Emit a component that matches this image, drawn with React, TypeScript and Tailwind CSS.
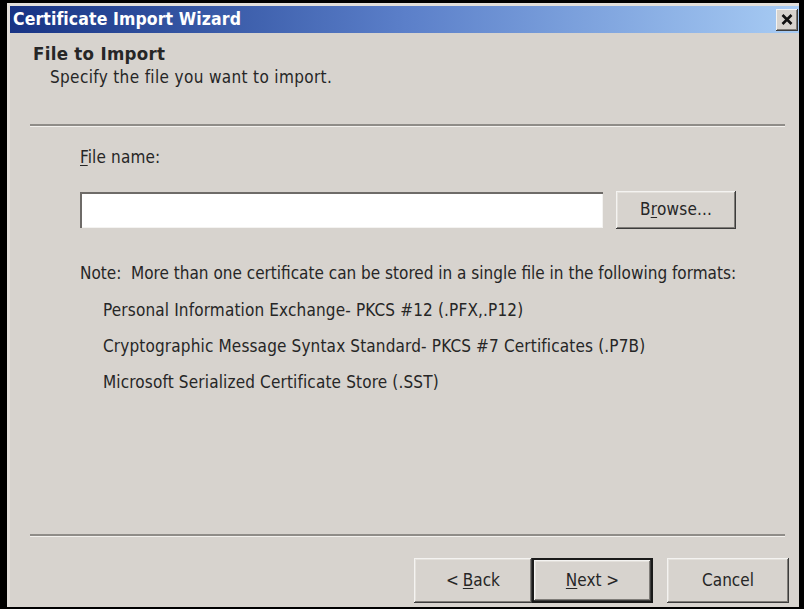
import React from "react";

const bevel =
  "shadow-[inset_-1px_-1px_0_#3c3c3c,inset_1px_1px_0_#f4f3f1,inset_-2px_-2px_0_#7f7c78,inset_2px_2px_0_#e4e1dc]";

function Btn({ children, className = "" }: { children: React.ReactNode; className?: string }) {
  return (
    <div
      className={`flex items-center justify-center bg-[#d7d3ce] text-[17px] text-[#262626] ${bevel} ${className}`}
    >
      {children}
    </div>
  );
}

function Sep({ className = "" }: { className?: string }) {
  return (
    <div className={`h-[3px] border-t-2 border-[#8f8c88] border-b border-b-[#f3f1ee] ${className}`} />
  );
}

export default function App() {
  return (
    <div className="w-[804px] h-[609px] bg-black pt-[3px] pl-[7px] pr-[5px] pb-[2px] font-['DejaVu_Sans_Condensed',sans-serif] text-[#262626]">
      <div className="w-full h-full flex flex-col bg-[#d7d3ce] border-t-[3px] border-l-[3px] border-[#e2dfdb]">
        {/* Title bar */}
        <div className="h-[27px] flex items-center justify-between pl-[3px] pr-[1px] bg-gradient-to-r from-[#183384] via-[#5b7fc9] to-[#a8ccf4]">
          <span className="text-white font-bold text-[17.5px] tracking-[0.1px]">Certificate Import Wizard</span>
          <div className="w-[22px] h-[22px] flex items-center justify-center bg-[#d7d3ce] shadow-[inset_-1px_-1px_0_#3c3c3c,inset_1px_1px_0_#f4f3f1,inset_-2px_-2px_0_#7f7c78]">
            <svg width="12" height="11" viewBox="0 0 12 11">
              <path d="M1.5 1 L10.5 10 M10.5 1 L1.5 10" stroke="#111" strokeWidth="2.6" />
            </svg>
          </div>
        </div>

        {/* Header */}
        <div className="pt-[11px] pl-[23px]">
          <div className="font-bold text-[18.5px] tracking-[0.3px] leading-[20px]">File to Import</div>
          <div className="pl-[17px] mt-[3px] text-[17px] tracking-[0.35px] leading-[20px]">Specify the file you want to import.</div>
        </div>
        <Sep className="mt-[37px] ml-[20px] mr-[14px]" />

        {/* Body */}
        <div className="pl-[70px] pr-[63px] pt-[20px] text-[17px] tracking-[0.15px]">
          <div className="leading-[20px]">
            <span className="underline underline-offset-[2px]">F</span>ile name:
          </div>
          <div className="mt-[25px] flex gap-[13px]">
            <div className="w-[523px] h-[36px] bg-white shadow-[inset_2px_2px_0_#6e6b68,inset_-1px_-1px_0_#f4f3f1]" />
            <Btn className="w-[120px] h-[38px] -mt-[1px]">
              B<span className="underline underline-offset-[2px]">r</span>owse...
            </Btn>
          </div>
          <div className="mt-[34px] leading-[20px] whitespace-nowrap tracking-[0px]">
            Note:&nbsp; More than one certificate can be stored in a single file in the following formats:
          </div>
          <div className="pl-[23px] mt-[17px] flex flex-col gap-[16px] leading-[20px]">
            <div>Personal Information Exchange- PKCS #12 (.PFX,.P12)</div>
            <div>Cryptographic Message Syntax Standard- PKCS #7 Certificates (.P7B)</div>
            <div>Microsoft Serialized Certificate Store (.SST)</div>
          </div>
        </div>

        <div className="flex-1" />
        <Sep className="ml-[20px] mr-[14px]" />

        {/* Buttons */}
        <div className="flex justify-end pr-[10px] pt-[21px] pb-[4px]">
          <Btn className="w-[118px] h-[45px]">
            &lt; <span className="underline underline-offset-[2px] ml-[4px]">B</span>ack
          </Btn>
          <Btn className="w-[121px] h-[45px] border-2 border-[#1a1a1a]">
            <span className="underline underline-offset-[2px]">N</span>ext &gt;
          </Btn>
          <Btn className="w-[122px] h-[45px] ml-[14px]">Cancel</Btn>
        </div>
      </div>
    </div>
  );
}
